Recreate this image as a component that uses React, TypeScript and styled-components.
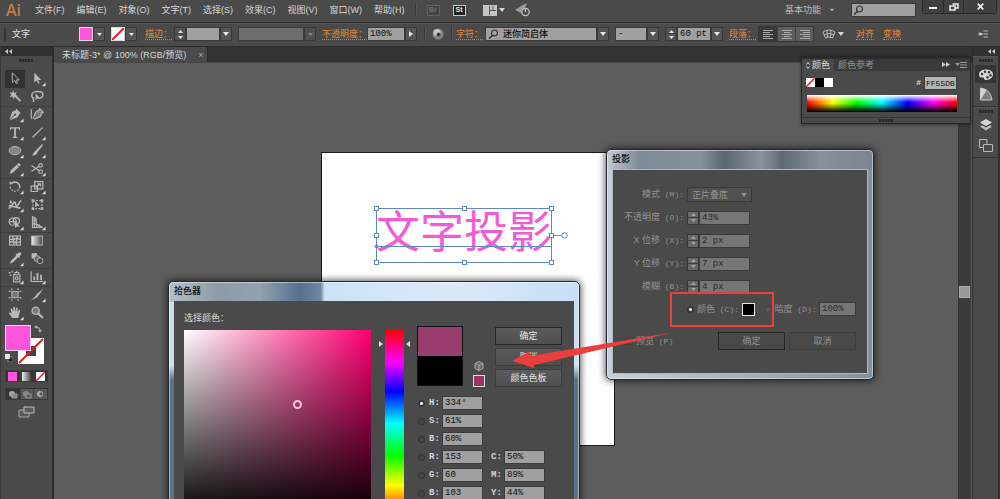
import React, { ReactNode, useState } from 'react';
import styled, { createGlobalStyle, css } from 'styled-components';

const c = {
  panel: '#4a4a4a',
  dark: '#333333',
  edge: '#2c2c2c',
  canvas: '#5d5d5d',
  field: '#a0a0a0',
  text: '#d6d6d6',
  orange: '#d08039',
  icon: '#b8b8b8',
  magenta: '#ff55db',
  red: '#ec3e3c',
};
const sans = `"Liberation Sans", "Noto Sans CJK SC", sans-serif`;
const mono = `"Liberation Mono", "Noto Sans CJK SC", monospace`;

const Global = createGlobalStyle`
  * { box-sizing: border-box; }
  body { margin: 0; background: ${c.canvas}; overflow: hidden; }
  button, input, select { font: inherit; color: inherit; margin: 0; padding: 0; border: 0; background: none; border-radius: 0; }
  input, select { min-width: 0; outline: none; }
  button { flex: none; white-space: nowrap; }
  select { appearance: none; }
  svg { display: block; flex: none; }
`;

const Shell = styled.div`
  display: flex;
  flex-direction: column;
  height: 100vh;
  overflow: hidden;
  background: ${c.canvas};
  color: ${c.text};
  font: 9px/12px ${sans};
`;

/* ---------- menu bar ---------- */
const MenuBar = styled.header`
  flex: none;
  display: flex;
  align-items: center;
  height: 23px;
  padding: 0 3px 2px 6px;
  background: ${c.panel};
  border-bottom: 1px solid ${c.edge};
`;
const Logo = styled.span`
  width: 23px;
  font: 600 16px/18px "Open Sans", sans-serif;
  color: #c27c4e;
`;
const Menus = styled.nav`
  display: flex;
`;
const MenuItem = styled.button`
  padding: 0 6px;
  height: 20px;
`;
const Divider = styled.i<{ $gap?: number }>`
  flex: none;
  width: 2px;
  height: 14px;
  margin: 0 ${(p) => p.$gap ?? 6}px;
  border-left: 1px solid #3a3a3a;
  border-right: 1px solid #545454;
`;
const Apps = styled.div`
  display: flex;
  gap: 13px;
  margin: 0 17px 0 6px;
`;
const AppBadge = styled.button<{ $on?: boolean }>`
  width: 13px;
  height: 11px;
  border: 1px solid ${(p) => (p.$on ? '#c8c8c8' : '#636363')};
  background: ${(p) => (p.$on ? '#222' : '#444')};
  color: ${(p) => (p.$on ? '#e8e8e8' : '#707070')};
  font: bold 7px/8px ${sans};
`;
const IconButton = styled.button<{ $mr?: number; $end?: boolean }>`
  display: flex;
  align-items: center;
  gap: 2px;
  margin-right: ${(p) => p.$mr ?? 0}px;
  ${(p) => p.$end && 'margin-left: auto;'}
`;
const Workspace = styled.button`
  display: flex;
  align-items: center;
  gap: 9px;
  margin-left: auto;
  color: #bdbdbd;
`;
const Search = styled.label`
  display: flex;
  align-items: center;
  width: 65px;
  height: 14px;
  margin: 0 6px 0 17px;
  padding-left: 1px;
  background: ${c.field};
  border: 1px solid #3a3a3a;
  input { flex: 1; }
`;
const WindowButtons = styled.div`
  display: flex;
  align-self: flex-start;
  border: 1px solid #2b2b2b;
  border-top: 0;
  border-radius: 0 0 3px 3px;
`;
const WindowButton = styled.button<{ $wide?: boolean }>`
  display: flex;
  align-items: center;
  justify-content: center;
  width: ${(p) => (p.$wide ? 33 : 20)}px;
  height: 13px;
  background: #404040;
  & + & { border-left: 1px solid #2b2b2b; }
`;

/* ---------- options bar ---------- */
const OptionsBar = styled.div`
  flex: none;
  display: flex;
  align-items: center;
  height: 24px;
  padding: 0 12px 2px 4px;
  background: ${c.panel};
  border-top: 1px solid #555;
  border-bottom: 1px solid ${c.edge};
`;
const Grip = styled.i`
  width: 2px;
  height: 13px;
  margin-right: 6px;
  background: #333;
`;
const ContextName = styled.strong`
  width: 67px;
  font-weight: 500;
`;
const Well = styled.button<{ $color?: string }>`
  width: 14px;
  height: 14px;
  border: 1px solid #d8d8d8;
  background: ${(p) => p.$color ?? '#fff'};
`;
const OrangeLink = styled.button<{ $w?: number }>`
  width: ${(p) => (p.$w ? p.$w + 'px' : 'auto')};
  text-align: left;
  color: ${c.orange};
  font-weight: 500;
  span { border-bottom: 1px dotted ${c.orange}; }
`;
const ArrowBox = styled.button<{ $off?: boolean; $mr?: number }>`
  display: flex;
  align-items: center;
  justify-content: center;
  width: 12px;
  height: 14px;
  margin-right: ${(p) => p.$mr ?? 6}px;
  border: 1px solid #373737;
  background: ${(p) => (p.$off ? '#505050' : '#555')};
  color: ${(p) => (p.$off ? '#888' : '#e6e6e6')};
`;
const fieldStyle = css`
  height: 14px;
  border: 1px solid #3b3b3b;
  background: ${c.field};
  color: #101010;
  font: 9px/12px ${mono};
  padding-left: 2px;
`;
const Field = styled.input<{ $w: number; $off?: boolean }>`
  ${fieldStyle}
  width: ${(p) => p.$w}px;
  flex: none;
  ${(p) => p.$off && css`background: #767676; color: #2a2a2a;`}
`;
const FieldSelect = styled.select<{ $w: number; $off?: boolean }>`
  ${fieldStyle}
  width: ${(p) => p.$w}px;
  ${(p) => p.$off && css`background: #6c6c6c; opacity: 1;`}
`;
const FontBox = styled.label`
  display: flex;
  align-items: center;
  width: 112px;
  ${fieldStyle}
  select { flex: 1; font: 500 9px/12px ${sans}; padding-left: 4px; color: #101010; }
`;
const StepBox = styled.span<{ $off?: boolean }>`
  flex: none;
  display: flex;
  flex-direction: column;
  width: 12px;
  height: 14px;
  border: 1px solid #373737;
  button {
    display: flex;
    align-items: center;
    justify-content: center;
    height: 6px;
    background: ${(p) => (p.$off ? '#686868' : '#525252')};
    color: ${(p) => (p.$off ? '#a2a2a2' : '#e0e0e0')};
  }
  button + button { box-shadow: 0 -1px #404040; }
`;
const Aligns = styled.div`
  display: flex;
  margin-right: 8px;
  border: 1px solid #363636;
`;
const AlignButton = styled.button<{ $on?: boolean }>`
  display: flex;
  align-items: center;
  justify-content: center;
  width: 18px;
  height: 14px;
  background: ${(p) => (p.$on ? '#393939' : '#5e5e5e')};
  & + & { border-left: 1px solid #444; }
`;

/* ---------- body ---------- */
const Body = styled.div`
  flex: 1;
  display: flex;
  min-height: 0;
`;
const Tools = styled.aside`
  flex: none;
  display: flex;
  flex-direction: column;
  width: 54px;
  background: ${c.panel};
  border-right: 2px solid ${c.edge};
  border-left: 1px solid #3a3a3a;
`;
const DockHead = styled.div<{ $end?: boolean }>`
  flex: none;
  display: flex;
  align-items: center;
  justify-content: ${(p) => (p.$end ? 'flex-end' : 'flex-start')};
  height: 9px;
  padding: 0 3px;
  background: #303030;
`;
const Dots = styled.i<{ $m?: string }>`
  flex: none;
  display: block;
  width: 14px;
  height: 3px;
  margin: ${(p) => p.$m ?? '2px auto 3px'};
  background: repeating-linear-gradient(90deg, #2a2a2a 0 2px, #3c3c3c 2px 3px);
`;
const ToolRow = styled.div<{ $sep?: boolean }>`
  flex: none;
  display: flex;
  gap: 2px;
  height: 18px;
  padding: 0 4px;
  ${(p) => p.$sep && 'box-shadow: inset 0 1px #3e3e3e;'}
`;
const Tool = styled.button<{ $on?: boolean }>`
  display: flex;
  align-items: center;
  justify-content: center;
  width: 20px;
  height: 18px;
  background: ${(p) => (p.$on ? '#323232' : 'none')};
  color: ${c.icon};
`;
const Proxy = styled.div`
  flex: none;
  display: grid;
  grid-template: 13px 13px 13px / 13px 13px 13px;
  margin: 3px 0 0 4px;
`;
const FillProxy = styled.button`
  grid-area: 1 / 1 / 3 / 3;
  z-index: 1;
  background: ${c.magenta};
  border: 1px solid #f5c8ec;
`;
const StrokeProxy = styled.button`
  grid-area: 2 / 2 / 4 / 4;
`;
const SwapProxy = styled.button`
  grid-area: 1 / 3;
  display: flex;
  justify-content: center;
`;
const DefaultProxy = styled.button`
  grid-area: 3 / 1;
  display: flex;
  align-items: center;
`;
const Modes = styled.div`
  flex: none;
  display: flex;
  margin: 6px 4px 0;
  height: 12px;
  border: 1px solid #393939;
`;
const Mode = styled.button<{ $on?: boolean }>`
  flex: 1 1 14px;
  display: flex;
  align-items: center;
  justify-content: center;
  background: ${(p) => (p.$on ? '#353535' : '#575757')};
  & + & { border-left: 1px solid #444; }
`;
const ScreenMode = styled.button`
  display: flex;
  align-self: center;
  margin-top: 6px;
`;

const Center = styled.main`
  flex: 1;
  min-width: 0;
  display: flex;
  flex-direction: column;
`;
const TabStrip = styled.div`
  flex: none;
  display: flex;
  height: 15px;
  background: ${c.dark};
`;
const Tab = styled.div`
  display: flex;
  align-items: center;
  gap: 12px;
  padding: 0 4px 0 8px;
  background: ${c.panel};
  border-right: 1px solid #2a2a2a;
  button { color: #a8a8a8; }
`;
const Stage = styled.div`
  flex: 1;
  position: relative;
  min-height: 0;
  border-top: 1px solid #474747;
`;
const ScrollTrack = styled.div`
  position: absolute;
  inset: 0 1px 0 auto;
  width: 13px;
  padding: 223px 1px 0 0;
  background: #3a3a3a;
  border-left: 1px solid #343434;
`;
const ScrollThumb = styled.i`
  display: block;
  height: 12px;
  background: #989898;
  border: 1px solid #aaa;
`;
const Artboard = styled.section`
  position: absolute;
  left: 267px;
  top: 89px;
  width: 294px;
  height: 294px;
  background: #fff;
  border: 1px solid #1c1c1c;
`;
const ArtText = styled.p`
  position: absolute;
  left: 54px;
  top: 49px;
  margin: 0;
  font: 400 44px/54px "Noto Sans CJK SC", sans-serif;
  color: #f25cd2;
  white-space: nowrap;
`;
const Selection = styled.svg`
  position: absolute;
  left: 50px;
  top: 51px;
`;

/* ---------- dialogs ---------- */
const Glass = styled.section<{ $x: number; $y: number; $w: number; $tone: string; $title: string }>`
  position: absolute;
  left: ${(p) => p.$x}px;
  top: ${(p) => p.$y}px;
  width: ${(p) => p.$w}px;
  padding: 0 5px 5px;
  border: 1px solid #222a33;
  border-radius: 5px;
  background: ${(p) => p.$title} top / 100% 20px no-repeat, ${(p) => p.$tone};
  box-shadow: 0 0 7px 1px rgba(0, 0, 0, 0.65), inset 0 0 0 1px rgba(255, 255, 255, 0.45);
`;
const GlassTitle = styled.h2`
  margin: 0;
  height: 19px;
  font: 500 9px/19px ${sans};
  color: #0c0c0c;
`;
const ShadowBody = styled.form`
  padding: 13px 11px 23px 0;
  border: 1px solid #aeb9c3;
  background: ${c.panel};
  color: #929292;
`;
const FormRow = styled.div`
  display: flex;
  align-items: center;
  height: 23px;
`;
const FormLabel = styled.label`
  width: 71px;
  margin-right: 3px;
  text-align: right;
  white-space: nowrap;
`;
const K = styled.span`
  font: 8px/12px ${mono};
`;
const BlendBox = styled.div`
  display: flex;
  align-items: center;
  width: 65px;
  height: 15px;
  padding: 0 4px;
  border: 1px solid #3a3a3a;
  background: #505050;
  select { flex: 1; color: #929292; opacity: 1; }
`;
const ChoiceRow = styled.div`
  display: flex;
  align-items: center;
  height: 22px;
  padding-left: 74px;
`;
const Radio = styled.input<{ $dim?: boolean }>`
  appearance: none;
  flex: none;
  width: 7px;
  height: 7px;
  border-radius: 50%;
  border: 1px solid ${(p) => (p.$dim ? '#444' : '#2f2f2f')};
  background: ${(p) => (p.$dim ? '#585858' : '#454545')};
  &:checked { background: radial-gradient(circle, #eee 0 1px, #3c3c3c 2px); }
`;
const RadioLabel = styled.label<{ $w: number; $ml?: number }>`
  display: flex;
  align-items: center;
  gap: 3px;
  width: ${(p) => p.$w}px;
  margin-left: ${(p) => p.$ml ?? 0}px;
  white-space: nowrap;
`;
const ShadowSwatch = styled.button`
  width: 13px;
  height: 13px;
  background: #000;
  border: 1px solid #e4e4e4;
`;
const FootRow = styled.div`
  display: flex;
  align-items: center;
  gap: 4px;
  padding-left: 12px;
  margin-top: 12px;
`;
const Preview = styled.label`
  flex: 1;
  display: flex;
  align-items: center;
  gap: 3px;
  input {
    appearance: none;
    width: 8px;
    height: 8px;
    border: 1px solid #3e3e3e;
  }
`;
const DialogButton = styled.button<{ $main?: boolean; $dim?: boolean }>`
  width: 67px;
  height: 18px;
  border: 1px solid ${(p) => (p.$main ? '#262626' : '#3c3c3c')};
  background: ${(p) => (p.$dim ? '#484848' : 'linear-gradient(#5b5b5b, #4f4f4f)')};
  color: ${(p) => (p.$dim ? '#929292' : '#e2e2e2')};
`;

const PickerBody = styled.form`
  display: flex;
  align-items: flex-start;
  padding: 10px 12px 20px 10px;
  background: ${c.panel};
`;
const FieldColumn = styled.div`
  flex: none;
  width: 187px;
  margin-right: 7px;
`;
const PickerCaption = styled.p`
  margin: 0 0 4px;
  line-height: 15px;
`;
const SatField = styled.div`
  position: relative;
  height: 187px;
  background: linear-gradient(transparent, #000), linear-gradient(90deg, #fff, #ff0070);
`;
const Ring = styled.i`
  position: absolute;
  left: 109px;
  top: 70px;
  width: 9px;
  height: 9px;
  border: 2px solid #f6c3dc;
  border-radius: 50%;
`;
const HueColumn = styled.div`
  flex: none;
  display: flex;
  align-items: flex-start;
  gap: 1px;
  margin: 19px 6px 0 0;
  svg { margin-top: 11px; }
`;
const HueStrip = styled.div`
  width: 19px;
  height: 187px;
  background: linear-gradient(#f00, #f0f 17%, #00f 33%, #0ff 50%, #0f0 67%, #ff0 83%, #f00);
`;
const Values = styled.div`
  flex: 1;
`;
const PickerTop = styled.div`
  display: flex;
  margin: 15px 0 7px;
  height: 61px;
`;
const Compare = styled.div`
  width: 46px;
  height: 60px;
  margin-right: 10px;
  background: linear-gradient(#993c6e 0 29px, #000 29px);
  border: 1px solid #111;
`;
const WebSafe = styled.div`
  display: flex;
  flex-direction: column;
  align-items: center;
  justify-content: flex-end;
  gap: 4px;
  width: 12px;
  margin-right: 10px;
`;
const WebSwatch = styled.button`
  width: 12px;
  height: 12px;
  background: #993366;
  border: 1px solid #dcdcdc;
`;
const ButtonStack = styled.div`
  display: flex;
  flex-direction: column;
  gap: 3px;
  padding-top: 1px;
`;
const Channels = styled.div`
  display: grid;
  grid-template-columns: 65px 1fr;
  grid-auto-rows: 18px;
  column-gap: 8px;
  align-items: center;
  padding-left: 1px;
`;
const Channel = styled.label<{ $col?: number }>`
  grid-column: ${(p) => p.$col ?? 1};
  display: flex;
  align-items: center;
  font: bold 9px/12px ${mono};
  & > span { width: 13px; margin-left: ${(p) => (p.$col === 2 ? 0 : 4)}px; }
  input { font-weight: 400; }
`;

/* ---------- colour panel and right dock ---------- */
const ColorPanel = styled.section`
  position: absolute;
  right: 1px;
  top: -7px;
  width: 170px;
  background: ${c.panel};
  border: 1px solid #262626;
  box-shadow: 0 1px 3px rgba(0, 0, 0, 0.4);
`;
const PanelTabs = styled.div`
  display: flex;
  align-items: center;
  height: 14px;
  background: #3a3a3a;
  border-top: 2px solid #2c2c2c;
`;
const PanelTab = styled.button<{ $on?: boolean }>`
  display: flex;
  align-items: center;
  gap: 2px;
  height: 12px;
  padding: 0 4px;
  background: ${(p) => (p.$on ? c.panel : 'none')};
  color: ${(p) => (p.$on ? '#d8d8d8' : '#959595')};
`;
const PanelIcons = styled.div`
  display: flex;
  gap: 5px;
  margin: 0 3px 0 auto;
`;
const PanelRow = styled.div`
  display: flex;
  padding: 6px 13px 6px 4px;
  height: 24px;
`;
const Chip = styled.button<{ $c: string }>`
  width: 9px;
  height: 9px;
  margin-top: 1px;
  background: ${(p) => p.$c};
`;
const Hex = styled.label`
  display: flex;
  align-items: center;
  gap: 3px;
  margin-left: auto;
  height: 12px;
  font: bold 8px/10px ${mono};
  input { padding-left: 1px; font: 8px/10px ${mono}; background: #b4b4b4; }
`;
const Spectrum = styled.div`
  height: 17px;
  margin: 0 13px 5px 5px;
  background: linear-gradient(#fff, transparent 42%, transparent 48%, #000),
    linear-gradient(90deg, #f00, #ff0 17%, #0f0 33%, #0ff 50%, #00f 67%, #f0f 84%, #f00);
`;
const PanelFoot = styled.div`
  height: 6px;
  border-top: 1px solid #383838;
`;
const Dock = styled.aside`
  flex: none;
  display: flex;
  flex-direction: column;
  width: 28px;
  background: ${c.panel};
  border-left: 1px solid ${c.edge};
  border-right: 2px solid #303030;
`;
const DockGroup = styled.div`
  padding-bottom: 1px;
  border-bottom: 1px solid #333;
  border-top: 1px solid #555;
`;
const DockButton = styled.button<{ $on?: boolean }>`
  display: flex;
  align-items: center;
  justify-content: center;
  width: 21px;
  height: 18px;
  margin: 0 auto 2px;
  border-radius: 2px;
  background: ${(p) => (p.$on ? '#343434' : 'none')};
`;
const Annotation = styled.svg`
  position: absolute;
  left: 0;
  top: 0;
  pointer-events: none;
`;

/* ---------- small drawings ---------- */
const Down = ({ s = 6 }: { s?: number }) => (
  <svg width={s} height="4" viewBox="0 0 6 4" aria-hidden><path d="M0 0h6L3 4z" fill="currentColor" /></svg>
);
const Right = () => (
  <svg width="4" height="6" viewBox="0 0 4 6" aria-hidden><path d="M0 0v6l4-3z" fill="currentColor" /></svg>
);
const Up = () => (
  <svg width="5" height="3" viewBox="0 0 5 3" aria-hidden><path d="M0 3h5L2.500 0z" fill="currentColor" /></svg>
);
const DownSmall = () => (
  <svg width="5" height="3" viewBox="0 0 5 3" aria-hidden><path d="M0 0h5L2.500 3z" fill="currentColor" /></svg>
);
const Chevrons = ({ right }: { right?: boolean }) => (
  <svg width="8" height="5" viewBox="0 0 8 5" aria-hidden>
    <path d={right ? 'M0 0v5l4-2.500zM4 0v5l4-2.500z' : 'M4 0v5L1 2.500zM8 0v5L5 2.500z'} fill="#c8c8c8" />
  </svg>
);
const Magnifier = () => (
  <svg width="11" height="10" viewBox="0 0 11 10" aria-hidden>
    <circle cx="6.500" cy="4" r="3" fill="none" stroke="#333" strokeWidth="1.200" />
    <path d="M4.500 6.500L1 9.500" stroke="#333" strokeWidth="1.600" />
  </svg>
);
const NoneMark = ({ w }: { w: number }) => (
  <svg width={w} height={w} viewBox="0 0 12 12" aria-hidden>
    <rect width="12" height="12" fill="#fff" /><path d="M0 12L12 0" stroke="#d8202c" strokeWidth="2" />
  </svg>
);
const Stepper = ({ off, name }: { off?: boolean; name: string }) => (
  <StepBox $off={off}>
    <button type="button" aria-label={`${name} +`}><Up /></button>
    <button type="button" aria-label={`${name} -`}><DownSmall /></button>
  </StepBox>
);

const line = { fill: 'none', stroke: 'currentColor', strokeWidth: 1.3 } as const;
const solid = { fill: 'currentColor' } as const;

type ToolDef = [name: string, art: ReactNode, more?: boolean];
const tools: { sep?: boolean; pair: [ToolDef, ToolDef] }[] = [
  { pair: [
    ['选择', <path d="M5 1.500v11l2.800-2.400 1.600 3.600 1.500-.7-1.600-3.400h3.500z" {...line} strokeWidth={1} />],
    ['直接选择', <path d="M5 1.500v11l2.800-2.400 1.600 3.600 1.500-.7-1.600-3.400h3.500z" {...solid} />, true]] },
  { pair: [
    ['魔棒', <><path d="M8 7l6 6" {...line} strokeWidth={2} /><path d="M6 1l1 3 3-1-1.500 2.600L11 8H8l-1.500 3L5.500 8 2 8.500 4 6 2 3l3 1z" {...solid} /></>],
    ['套索', <><path d="M5 10C1 9 1 3 7 2.500s8 1 7.500 4-4 3.500-5 3.500M4 9c-1 2 1 3 0 5" {...line} strokeWidth={1.600} /><path d="M6.500 4v8l2-1.700h2.800z" {...solid} /></>]] },
  { sep: true, pair: [
    ['钢笔', <><path d="M9.500 1.500l5 5-2 1c0 3-2 4.500-5.500 5L3 14l-1-1 1.500-4C4 5.500 5.500 4 8.500 3.500z" {...solid} /><path d="M2.500 13.500l5-5" stroke="#4a4a4a" /><circle cx="8" cy="8" r="1.200" fill="#4a4a4a" /></>, true],
    ['曲率', <><path d="M11 1.500l4 4-2 1c0 3-1.500 4.500-4.500 5L5.500 13 4 12l1.500-3.500C6 5.500 7 4 10 3.500z" fill="#808080" stroke="currentColor" strokeWidth="1.200" /><path d="M4.500 12.500l4.500-5" stroke="#4a4a4a" /><path d="M1 2c3 3-2 6 1.500 11" {...line} /></>]] },
  { pair: [
    ['文字', <path d="M2.500 2h11v3.200h-1L12 3.500H9V12.500l1.700.5v1H5.300v-1L7 12.500v-9H4l-.5 1.700h-1z" {...solid} />, true],
    ['直线段', <path d="M3 13.500L14 2.500" {...line} />, true]] },
  { pair: [
    ['椭圆', <ellipse cx="8" cy="8" rx="6.500" ry="4.600" fill="#858585" stroke="currentColor" />, true],
    ['画笔', <path d="M15 1.500L8.500 10c-.5 3-3.500 4-7 3.500 2-.5 2-2.500 3.500-4L13.500 1z" {...solid} />, true]] },
  { pair: [
    ['铅笔', <><path d="M12 1.500l2.500 2.500L6 12.500 2 14l1.500-4z" {...solid} /><path d="M10 3.500L12.500 6" stroke="#4a4a4a" /></>, true],
    ['剪刀', <><circle cx="12" cy="4.500" r="2" {...line} /><circle cx="12" cy="11.500" r="2" {...line} /><path d="M10.500 5.500L2 11M10.500 10.500L2 4.500" {...line} /></>, true]] },
  { sep: true, pair: [
    ['旋转', <><path d="M4.500 4A5.500 5.500 0 0 1 13 10" {...line} strokeWidth={1.600} /><path d="M12 11.500A5.500 5.500 0 0 1 2.500 8" {...line} strokeDasharray="2 1.500" /><path d="M2 6V2l4 3z" {...solid} /></>, true],
    ['比例缩放', <><path d="M5.500 2.500h9v8h-9zM1.500 7.500h7v6h-7z" {...line} /><path d="M7 9l4-3.500M8.500 5H12v3" {...line} /></>, true]] },
  { pair: [
    ['宽度', <><path d="M1 12.500c4-2 4-6 6-7s1 4 3 4 2-5 5-6M1 9l13 3" {...line} strokeWidth={1.800} /><path d="M3 2l2 4-3 1z" {...solid} /></>, true],
    ['自由变换', <><rect x="3.500" y="3.500" width="10" height="9" {...line} strokeDasharray="2 1.500" /><path d="M2 2h3v3H2zM12 2h3v3h-3zM2 11h3v3H2zM12 11h3v3h-3z" {...solid} /><path d="M6 4v7l2-1.500h3z" {...solid} /></>]] },
  { pair: [
    ['形状生成器', <><circle cx="5.500" cy="7" r="4" {...line} /><circle cx="9.500" cy="6" r="3.500" {...line} /><path d="M2 7h8" {...line} /><path d="M8 6v8l2-1.700h3.500z" {...solid} /></>, true],
    ['透视网格', <><path d="M3 1.500v12h11.500L7 10V3.500z" {...line} /><path d="M5 2.500v11M7.500 8v5.500M10 10v3.500M3 5l4 1M3 9l8 2" {...line} /></>, true]] },
  { sep: true, pair: [
    ['网格', <><rect x="2" y="3" width="12" height="10" {...line} /><path d="M2 6c4 3 7-3 12 1M2 10c4-3 7 3 12-1M6 3c-2 4 3 6 0 10M10 3c2 4-3 6 0 10" {...line} strokeWidth={1.600} /></>],
    ['渐变', <rect x="2" y="3" width="12" height="10" fill="url(#toolGradient)" stroke="currentColor" />]] },
  { pair: [
    ['吸管', <path d="M14.500 1.500c-1.500-1-3 0-4 1.500l-1-.5-1 1 1 1L4 10l-2 4 4-2 5.500-5.500 1 1 1-1-.5-1c1.500-1 2.500-3 1.500-4z" {...solid} />, true],
    ['混合', <><rect x="2" y="2" width="6" height="6" {...solid} /><circle cx="8" cy="8" r="3.200" fill="#6d6d6d" stroke="currentColor" /><circle cx="11.500" cy="10.500" r="3.200" fill="#4a4a4a" stroke="currentColor" /></>]] },
  { sep: true, pair: [
    ['符号喷枪', <><path d="M6.500 6h7v8h-7zM8 6V3.500h4V6M10 1.500v2" {...line} /><circle cx="10" cy="10" r="1.600" {...line} /><path d="M1 3h2v1.500H1zM4 2h2v1.500H4zM2 6h2v1.500H2z" {...solid} /></>, true],
    ['柱形图', <><path d="M1.500 2v11.500H15" {...line} /><path d="M4 8h2v4H4zM7.500 4h2v8h-2zM11.500 6h2v6h-2z" {...solid} /></>, true]] },
  { sep: true, pair: [
    ['画板', <><rect x="4.500" y="4.500" width="7" height="7" fill="#777" stroke="currentColor" /><path d="M4.500 1v2M11.500 1v2M4.500 13v2M11.500 13v2M1 4.500h2M1 11.500h2M13 4.500h2M13 11.500h2" {...line} /></>],
    ['切片', <path d="M15 1.500L8 7 6.500 9.500 1 14.500l7.500-3.500 1.500-2.500z" {...solid} />, true]] },
  { pair: [
    ['抓手', <path d="M5 14l-4-5.500c.5-1 1.500-.7 3 .8L3.200 4c.8-.8 1.500-.3 1.800.4L6 7.500 6.200 2c.7-.8 1.500-.5 1.800.2l.3 5 1.200-4.700c.8-.6 1.500 0 1.500.7L10.500 8l2-3c.8-.4 1.500.2 1.200 1L11.500 14z" {...solid} />, true],
    ['缩放', <><circle cx="6.500" cy="6" r="4" fill="#7c7c7c" stroke="currentColor" strokeWidth="1.500" /><path d="M9.500 9l5 5" {...line} strokeWidth={2.400} /></>]] },
];

const ToolIcon = ({ art, more }: { art: ReactNode; more?: boolean }) => (
  <svg width="18" height="16" viewBox="-2 0 20 17" aria-hidden>
    {art}
    {more && <path d="M17.500 12.500v4h-4z" fill="#d5d5d5" />}
  </svg>
);

const menus = ['文件(F)', '编辑(E)', '对象(O)', '文字(T)', '选择(S)', '效果(C)', '视图(V)', '窗口(W)', '帮助(H)'];

const TopMenu = () => (
  <MenuBar>
    <Logo>Ai</Logo>
    <Menus>{menus.map((m) => <MenuItem key={m}>{m}</MenuItem>)}</Menus>
    <Divider $gap={4} />
    <Apps>
      <AppBadge aria-label="Bridge">Br</AppBadge>
      <AppBadge $on aria-label="Stock">St</AppBadge>
    </Apps>
    <IconButton $mr={10} aria-label="排列文档">
      <svg width="14" height="11" viewBox="0 0 14 11"><path d="M0 0h14v11H0z" fill="#c4c4c4" /><path d="M6.500 1v9M7 5.500h6M10 1v4" stroke="#555" /></svg>
      <Down />
    </IconButton>
    <IconButton aria-label="GPU 性能">
      <svg width="16" height="14" viewBox="0 0 16 14">
        <path d="M0 7l6-4 6-3-2 5-3 2-1 3zM1 10l4-1" fill="#9a9a9a" />
        <circle cx="10.500" cy="9" r="3.700" fill="#4a4a4a" stroke="#c0c0c0" strokeWidth="1.300" /><path d="M10.500 5v4" stroke="#c0c0c0" strokeWidth="1.300" />
      </svg>
    </IconButton>
    <Workspace>基本功能<Down s={4} /></Workspace>
    <Search><Magnifier /><input type="search" aria-label="搜索" /></Search>
    <WindowButtons>
      <WindowButton aria-label="最小化"><svg width="8" height="7"><path d="M0 4h8v2H0z" fill="#eee" /></svg></WindowButton>
      <WindowButton aria-label="还原">
        <svg width="10" height="8" viewBox="0 0 10 8"><path d="M3.500 1h5.500v4H6.500M1 3h5v4H1z" fill="none" stroke="#eee" strokeWidth="1.500" /></svg>
      </WindowButton>
      <WindowButton $wide aria-label="关闭"><svg width="7" height="7" viewBox="0 0 7 7"><path d="M.7.7l5.600 5.600M6.300.7L.7 6.300" stroke="#eee" strokeWidth="1.700" /></svg></WindowButton>
    </WindowButtons>
  </MenuBar>
);

const alignArt = [
  'M0 .5h10M0 2.500h7M0 4.500h10M0 6.500h7M0 8.500h10',
  'M0 .5h10M2 2.500h6M0 4.500h10M2 6.500h6M0 8.500h10',
  'M0 .5h10M3 2.500h7M0 4.500h10M3 6.500h7M0 8.500h10',
];

const Options = () => {
  const [align, setAlign] = useState(0);
  return (
    <OptionsBar>
      <Grip />
      <ContextName>文字</ContextName>
      <Well $color={c.magenta} aria-label="填色" />
      <ArrowBox aria-label="填色选项"><DownSmall /></ArrowBox>
      <Well aria-label="描边色"><NoneMark w={12} /></Well>
      <ArrowBox $mr={8} aria-label="描边色选项"><DownSmall /></ArrowBox>
      <OrangeLink $w={29}><span>描边：</span></OrangeLink>
      <Stepper name="描边" />
      <Field $w={34} aria-label="描边粗细" />
      <ArrowBox aria-label="描边粗细选项"><Down /></ArrowBox>
      <FieldSelect $w={66} $off disabled aria-label="宽度配置文件"><option> </option></FieldSelect>
      <ArrowBox $off aria-label="宽度配置选项"><DownSmall /></ArrowBox>
      <OrangeLink $w={45}><span>不透明度：</span></OrangeLink>
      <Field $w={38} defaultValue="100%" aria-label="不透明度" />
      <ArrowBox $mr={4} aria-label="不透明度滑块"><Right /></ArrowBox>
      <Divider $gap={3} />
      <IconButton $mr={1} aria-label="重新着色">
        <svg width="18" height="12" viewBox="0 0 18 12"><circle cx="9" cy="6" r="5.500" fill="#858585" /><circle cx="8" cy="4.500" r="3.500" fill="#c4c4c4" /><circle cx="9.500" cy="6.500" r="2" fill="#3c3c3c" /></svg>
      </IconButton>
      <Divider $gap={3} />
      <OrangeLink $w={29}><span>字符：</span></OrangeLink>
      <FontBox><Magnifier /><select aria-label="字体"><option>迷你简启体</option></select></FontBox>
      <ArrowBox aria-label="字体列表"><Down /></ArrowBox>
      <FieldSelect $w={32} aria-label="字体样式"><option>-</option></FieldSelect>
      <ArrowBox aria-label="样式列表"><Down /></ArrowBox>
      <Stepper name="字号" />
      <Field $w={34} defaultValue="60 pt" aria-label="字号" />
      <ArrowBox aria-label="字号列表"><Down /></ArrowBox>
      <OrangeLink $w={29}><span>段落：</span></OrangeLink>
      <Aligns>
        {alignArt.map((d, i) => (
          <AlignButton key={d} $on={align === i} onClick={() => setAlign(i)} aria-label={['左对齐', '居中对齐', '右对齐'][i]}>
            <svg width="10" height="9"><path d={d} stroke="#a8a8a8" /></svg>
          </AlignButton>
        ))}
      </Aligns>
      <IconButton $mr={12} aria-label="封套变形">
        <svg width="14" height="11" viewBox="0 0 14 11"><path d="M1 3q6-4 12 0l-2.500 6q-3.500-2-7 0zM2 6q5-3 10 0M5 1.500l.5 7M9 1.500l-.5 7" fill="none" stroke="#b8b8b8" /></svg>
        <Down />
      </IconButton>
      <OrangeLink $w={27}><span>对齐</span></OrangeLink>
      <OrangeLink><span>变换</span></OrangeLink>
      <IconButton $end aria-label="面板选项">
        <svg width="10" height="8" viewBox="0 0 10 8"><path d="M0 4h5M5.500 1h5M5.500 4h5M5.500 7h5" stroke="#bbb" fill="none" /><path d="M1.500 2v4l3-2z" fill="#ccc" /></svg>
      </IconButton>
    </OptionsBar>
  );
};

const ToolPanel = () => {
  const [active, setActive] = useState('选择');
  return (
    <Tools>
      <DockHead><Chevrons /></DockHead>
      <Dots $m="3px 0 8px 18px" />
      {tools.map(({ sep, pair }) => (
        <ToolRow key={pair[0][0]} $sep={sep}>
          {pair.map(([name, art, more]) => (
            <Tool key={name} $on={active === name} onClick={() => setActive(name)} aria-label={name}>
              <ToolIcon art={art} more={more} />
            </Tool>
          ))}
        </ToolRow>
      ))}
      <Proxy>
        <FillProxy aria-label="填色" />
        <StrokeProxy aria-label="描边">
          <svg width="26" height="26" viewBox="0 0 26 26">
            <path d="M0 0h26v26H0zM8 8v10h10V8z" fill="#fff" fillRule="evenodd" />
            <path d="M8 8h10v10H8z" fill="#444" /><path d="M1 25L25 1" stroke="#d8202c" strokeWidth="2" />
          </svg>
        </StrokeProxy>
        <SwapProxy aria-label="互换填色和描边">
          <svg width="8" height="8" viewBox="0 0 8 8"><path d="M2 2q4 0 4 4" fill="none" stroke="#aaa" strokeWidth="1.200" /><path d="M3 0v4L0 2zM4 5h4L6 8z" fill="#aaa" /></svg>
        </SwapProxy>
        <DefaultProxy aria-label="默认填色和描边">
          <svg width="8" height="8" viewBox="0 0 8 8"><path d="M3 3h5v5H3z" fill="#222" stroke="#888" /><path d="M0 0h5v5H0z" fill="#e8e8e8" /></svg>
        </DefaultProxy>
      </Proxy>
      <Modes>
        <Mode $on aria-label="颜色"><svg width="9" height="9"><path d="M0 0h9v9H0z" fill={c.magenta} /></svg></Mode>
        <Mode $on aria-label="渐变"><svg width="9" height="9"><path d="M0 0h9v9H0z" fill="url(#toolGradient)" /></svg></Mode>
        <Mode $on aria-label="无"><NoneMark w={9} /></Mode>
      </Modes>
      <Modes>
        {[0, 1, 2].map((i) => (
          <Mode key={i} $on={i === 0} aria-label={['正常绘图', '背面绘图', '内部绘图'][i]}>
            <svg width="10" height="9" viewBox="0 0 10 9">
              <circle cx="4" cy="4" r="3" fill={i === 1 ? '#888' : '#a8a8a8'} />
              {i < 2 ? <path d="M4 4h5v4H4z" fill={i === 0 ? '#888' : '#5a5a5a'} stroke="#999" /> : <circle cx="5" cy="4" r="1.400" fill="#555" />}
            </svg>
          </Mode>
        ))}
      </Modes>
      <ScreenMode aria-label="更改屏幕模式">
        <svg width="17" height="13" viewBox="0 0 17 13"><path d="M1 4h10v7H1z" fill="#5a5a5a" stroke="#aaa" /><path d="M6 1h10v6H6z" fill="#5a5a5a" stroke="#bbb" /></svg>
      </ScreenMode>
    </Tools>
  );
};

const handles = [[0, 0], [88, 0], [175, 0], [0, 27], [175, 27], [0, 54], [88, 54], [175, 54]];
const Art = () => (
  <Artboard>
    <ArtText>文字投影</ArtText>
    <Selection width="200" height="64" viewBox="-4 -4 200 64" fill="none" stroke="#5d87c9">
      <path d="M.5.5h175v54H.5zM0 38.500h175M175 27.500h10" />
      {handles.map(([x, y]) => <rect key={`${x}-${y}`} x={x - 1.5} y={y - 1.5} width="4" height="4" fill="#fff" />)}
      <circle cx="188.500" cy="27.500" r="2.700" fill="#fff" />
      <circle cx=".5" cy="38.500" r="1.500" fill="#5d87c9" />
    </Selection>
  </Artboard>
);

const shadowFields = [
  ['不透明度', 'O', '43%'],
  ['X 位移', 'X', '2 px'],
  ['Y 位移', 'Y', '7 px'],
  ['模糊', 'B', '4 px'],
];

const ShadowDialog = () => (
  <Glass
    $x={552} $y={86} $w={268}
    $tone="linear-gradient(90deg, #c6d0da, #84909c)"
    $title="linear-gradient(90deg, #c3cad2, #7f8b98 12%, #87919c 35%, #5c6674 44%, #8a939d 58%, #5f6977 66%, #87909b 80%, #7b8591)"
  >
    <GlassTitle>投影</GlassTitle>
    <ShadowBody onSubmit={(e) => e.preventDefault()}>
      <FormRow>
        <FormLabel htmlFor="blend">模式<K> (M):</K></FormLabel>
        <BlendBox><select id="blend" disabled><option>正片叠底</option></select><Down /></BlendBox>
      </FormRow>
      {shadowFields.map(([name, key, value]) => (
        <FormRow key={name}>
          <FormLabel htmlFor={`shadow-${key}`}>{name}<K> ({key}):</K></FormLabel>
          <Stepper off name={name} />
          <Field id={`shadow-${key}`} $w={51} $off defaultValue={value} />
        </FormRow>
      ))}
      <ChoiceRow>
        <RadioLabel $w={55}><Radio type="radio" name="mode" defaultChecked /><span>颜色<K> (C):</K></span></RadioLabel>
        <ShadowSwatch type="button" aria-label="投影颜色" />
        <RadioLabel $w={55} $ml={10}><Radio $dim type="radio" name="mode" /><span>暗度<K> (D):</K></span></RadioLabel>
        <Field $w={37} $off defaultValue="100%" aria-label="暗度" />
      </ChoiceRow>
      <FootRow>
        <Preview><input type="checkbox" /><span>预览<K> (P)</K></span></Preview>
        <DialogButton $main $dim>确定</DialogButton>
        <DialogButton type="button" $dim>取消</DialogButton>
      </FootRow>
    </ShadowBody>
  </Glass>
);

const left = [['H', '334°'], ['S', '61%'], ['B', '60%'], ['R', '153'], ['G', '60'], ['B', '103']];
const right = [null, null, null, ['C', '50%'], ['M', '89%'], ['Y', '44%']];

const Picker = () => (
  <Glass
    $x={114} $y={218} $w={412}
    $tone="linear-gradient(#cfdeec 0 84px, #5c7288 98px)"
    $title="linear-gradient(90deg, #b4bfca, #8e9aa7 12%, #93a2b1 22%, #56708e 32%, #6f88a3 37%, #cbe2f8 38%, #dbeafa 70%, #c5def7)"
  >
    <GlassTitle>拾色器</GlassTitle>
    <PickerBody onSubmit={(e) => e.preventDefault()}>
      <FieldColumn>
        <PickerCaption>选择颜色：</PickerCaption>
        <SatField><Ring /></SatField>
      </FieldColumn>
      <HueColumn>
        <svg width="6" height="7" viewBox="0 0 6 7"><path d="M1 0v6l4-3z" fill="#ddd" /></svg>
        <HueStrip />
        <svg width="6" height="7" viewBox="0 0 6 7"><path d="M5 0v6L1 3z" fill="#ddd" /></svg>
      </HueColumn>
      <Values>
        <PickerTop>
          <Compare />
          <WebSafe>
            <svg width="10" height="10" viewBox="0 0 10 10"><path d="M5 .5l4 2v5l-4 2-4-2v-5z" fill="#666" stroke="#aaa" /><path d="M1 2.500l4 2 4-2M5 4.500v5" stroke="#aaa" fill="none" /></svg>
            <WebSwatch type="button" aria-label="Web 安全颜色" />
          </WebSafe>
          <ButtonStack>
            <DialogButton $main>确定</DialogButton>
            <DialogButton type="button">取消</DialogButton>
            <DialogButton type="button">颜色色板</DialogButton>
          </ButtonStack>
        </PickerTop>
        <Channels>
          {left.map(([k, v], i) => (
            <React.Fragment key={i}>
              <Channel>
                <Radio type="radio" name="channel" defaultChecked={i === 0} aria-label={k} />
                <span>{k}:</span><Field $w={41} defaultValue={v} aria-label={k} />
              </Channel>
              {right[i] && <Channel $col={2}><span>{right[i]![0]}:</span><Field $w={41} defaultValue={right[i]![1]} /></Channel>}
            </React.Fragment>
          ))}
        </Channels>
      </Values>
    </PickerBody>
  </Glass>
);

const ColorDock = () => (
  <ColorPanel>
    <PanelTabs>
      <PanelTab $on><svg width="4" height="7" viewBox="0 0 4 7"><path d="M.5 2.500L2 .5l1.500 2M.5 4.500L2 6.500l1.500-2" fill="none" stroke="currentColor" /></svg>颜色</PanelTab>
      <PanelTab>颜色参考</PanelTab>
      <PanelIcons>
        <Chevrons right />
        <svg width="12" height="6" viewBox="0 0 12 6"><path d="M0 1h5L2.500 4zM5 0h7v1H5zM5 2.500h7v1H5zM5 5h7v1H5z" fill="#999" /></svg>
      </PanelIcons>
    </PanelTabs>
    <PanelRow>
      <Chip $c="#fff" aria-label="无"><NoneMark w={9} /></Chip>
      <Chip $c="#000" aria-label="黑色" />
      <Chip $c="#fff" aria-label="白色" />
      <Hex>#<Field $w={33} defaultValue="FF55DB" /></Hex>
    </PanelRow>
    <Spectrum />
    <PanelFoot><Dots $m="1px auto 0" /></PanelFoot>
  </ColorPanel>
);

const RightDock = () => (
  <Dock>
    <DockHead $end><Chevrons /></DockHead>
    <DockGroup>
      <Dots />
      <DockButton $on aria-label="颜色">
        <svg width="16" height="13" viewBox="0 0 16 13">
          <path d="M8 1.500c4.500 0 7 2.300 7 5S12 12 8.500 12 6.500 9.500 5 9.500 1 9.500 1 6.500 3.500 1.500 8 1.500z" fill="#d5d5d5" />
          <g fill="#343434"><circle cx="4" cy="6" r="1.200" /><circle cx="7" cy="3.800" r="1.200" /><circle cx="11" cy="4.200" r="1.200" /><circle cx="12.500" cy="7.300" r="1.200" /><circle cx="9.500" cy="9.300" r="1.200" /></g>
        </svg>
      </DockButton>
      <DockButton aria-label="颜色参考">
        <svg width="14" height="14" viewBox="0 0 14 14"><path d="M1.500 13V1q10 1 11.500 12z" fill="#7d7d7d" stroke="#c4c4c4" /><path d="M1.500 13V1q4 .5 6 2.500z" fill="#d0d0d0" /></svg>
      </DockButton>
    </DockGroup>
    <DockGroup>
      <Dots />
      <DockButton aria-label="图层">
        <svg width="14" height="14" viewBox="0 0 14 14"><path d="M7 1l6 3.500L7 8 1 4.500z" fill="#d5d5d5" /><path d="M1 8.500l2-1.200 4 2.300 4-2.300 2 1.200L7 12.500z" fill="#bdbdbd" /></svg>
      </DockButton>
      <DockButton aria-label="画板">
        <svg width="14" height="13" viewBox="0 0 14 13"><path d="M4 8.500H.5V.5H8V5M4.500 5.500h9v7h-9z" fill="none" stroke="#b8b8b8" /></svg>
      </DockButton>
    </DockGroup>
  </Dock>
);

export default function App() {
  return (
    <Shell>
      <Global />
      <svg width="0" height="0" aria-hidden><defs><linearGradient id="toolGradient"><stop stopColor="#eee" /><stop offset="1" stopColor="#444" /></linearGradient></defs></svg>
      <TopMenu />
      <Options />
      <Body>
        <ToolPanel />
        <Center>
          <TabStrip><Tab>未标题-3* @ 100% (RGB/预览)<button aria-label="关闭文档">×</button></Tab></TabStrip>
          <Stage>
            <ScrollTrack><ScrollThumb /></ScrollTrack>
            <Art />
            <ShadowDialog />
            <Picker />
            <ColorDock />
            <Annotation width="740" height="320" viewBox="0 0 740 320">
              <rect x="617" y="230" width="102" height="33" fill="none" stroke={c.red} strokeWidth="2" />
              <path d="M458 298L475 288.500 476 293 619 269.500 480 302 480 305z" fill={c.red} />
            </Annotation>
          </Stage>
        </Center>
        <RightDock />
      </Body>
    </Shell>
  );
}
